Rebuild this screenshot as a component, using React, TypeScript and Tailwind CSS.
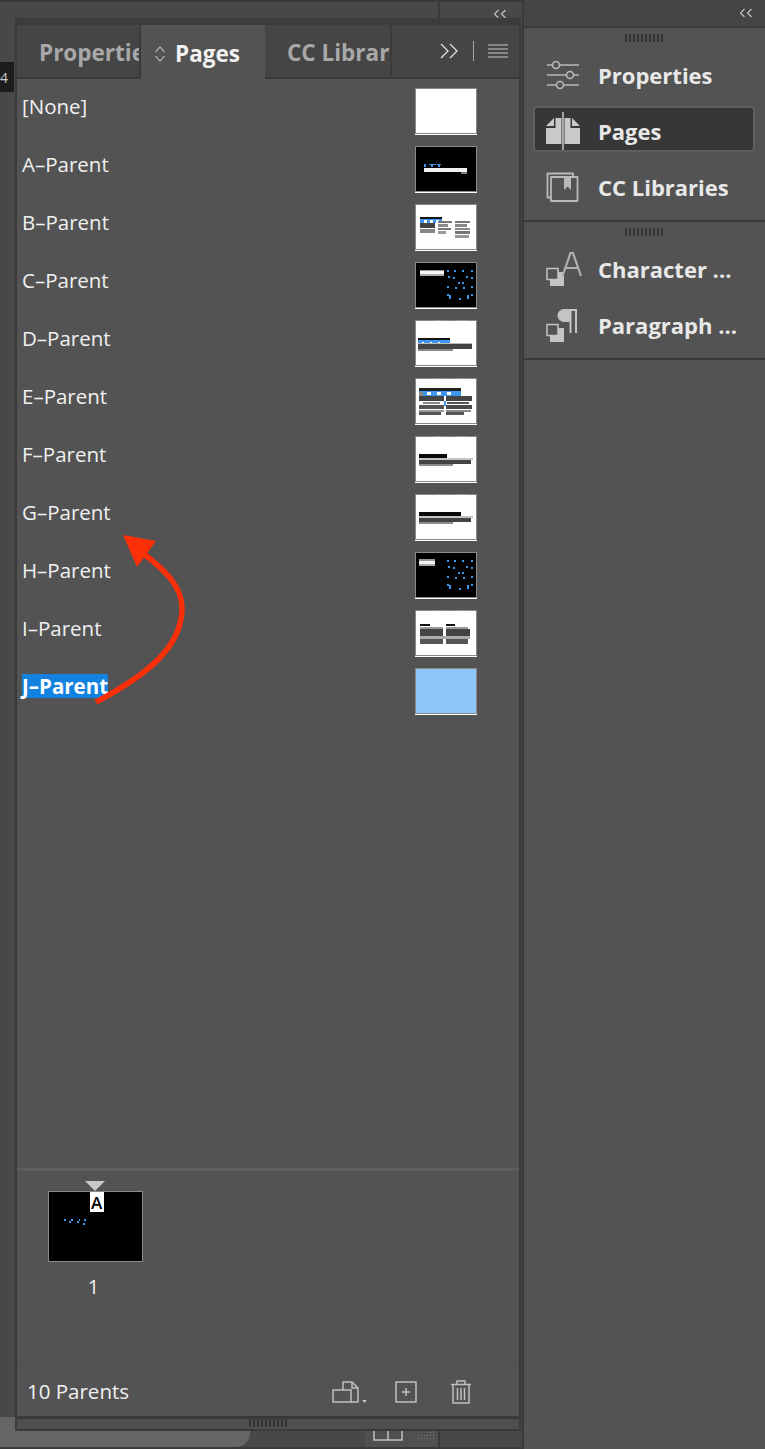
import { ReactNode } from "react";

const FONT = "font-['Open_Sans','Noto_Sans',sans-serif]";

type Bar = [number, number, number, number, string];

const BLUE = "#3d96ee";

// thumbnails are tiny page previews, drawn on a 62x46 grid
const dots = (): Bar[] => {
  const pts = [
    [32, 8], [39, 8], [47, 8], [56, 8], [33, 14], [38, 15], [51, 14], [56, 15],
    [43, 20], [47, 20], [32, 24], [40, 25], [48, 25], [56, 24], [32, 32], [56, 32],
  ];
  const bottom: Bar[] = [[34, 33, 2, 4, BLUE], [44, 36, 2, 2, BLUE], [52, 33, 2, 4, BLUE]];
  return [...pts.map(([x, y]) => [x, y, 2, 2, BLUE] as Bar), ...bottom];
};

const marks: Bar[] = [[20, 0, 6, 1, "#999999"], [43, 0, 9, 1, "#999999"]];

const textBars = (w: number, head: number): Bar[] => [
  ...marks,
  [4, 18, head, 4, "#0a0a0a"],
  [4, 22, w, 2, "#c4c4c4"],
  [4, 24, w - 2, 4, "#444444"],
  [4, 28, w - 20, 2, "#8c8c8c"],
];

const thumbs: { bg: string; bars: Bar[] }[] = [
  { bg: "#ffffff", bars: [] },
  {
    bg: "#000000",
    bars: [
      [9, 22, 43, 4, "#f0f0f0"],
      [46, 26, 6, 2, "#777777"],
      [9, 18, 2, 3, BLUE],
      [14, 18, 7, 1, BLUE],
      [16, 19, 2, 2, BLUE],
      [22, 18, 4, 1, BLUE],
      [23, 19, 2, 2, BLUE],
    ],
  },
  {
    bg: "#ffffff",
    bars: [
      [5, 13, 22, 2, "#111111"],
      [5, 15, 22, 4, BLUE],
      [9, 16, 3, 3, "#ffffff"],
      [15, 16, 3, 3, "#ffffff"],
      [21, 16, 3, 3, "#ffffff"],
      [5, 19, 15, 5, "#444444"],
      [5, 25, 15, 4, "#888888"],
      [23, 17, 14, 2, "#777777"],
      [23, 20, 10, 3, "#8a8a8a"],
      [23, 24, 13, 2, "#777777"],
      [23, 27, 8, 3, "#9a9a9a"],
      [40, 17, 15, 2, "#777777"],
      [40, 20, 12, 3, "#8a8a8a"],
      [40, 24, 15, 2, "#888888"],
      [40, 27, 15, 3, "#777777"],
      [40, 31, 14, 3, "#999999"],
    ],
  },
  { bg: "#000000", bars: [[5, 8, 24, 1, "#999999"], [5, 9, 24, 3, "#f4f4f4"], [5, 12, 24, 2, "#aaaaaa"], ...dots()] },
  {
    bg: "#ffffff",
    bars: [
      ...marks,
      [3, 18, 32, 2, "#111111"],
      [3, 20, 32, 4, BLUE],
      [7, 22, 2, 2, "#ffffff"],
      [15, 22, 2, 2, "#ffffff"],
      [23, 22, 2, 2, "#ffffff"],
      [3, 23, 54, 1, "#bbbbbb"],
      [3, 24, 54, 5, "#444444"],
      [3, 29, 35, 2, "#8a8a8a"],
    ],
  },
  {
    bg: "#ffffff",
    bars: [
      ...marks,
      [4, 10, 42, 3, "#222222"],
      [4, 13, 42, 5, BLUE],
      [4, 14, 4, 4, "#888888"],
      [12, 14, 4, 3, "#ffffff"],
      [22, 14, 4, 3, "#ffffff"],
      [32, 14, 4, 3, "#ffffff"],
      [4, 18, 25, 5, "#444444"],
      [31, 18, 26, 5, "#444444"],
      [8, 24, 17, 2, "#888888"],
      [29, 23, 2, 5, BLUE],
      [32, 24, 22, 2, "#555555"],
      [4, 27, 25, 4, "#555555"],
      [31, 27, 26, 4, "#4a4a4a"],
      [4, 32, 25, 2, "#999999"],
      [31, 32, 25, 2, "#888888"],
      [4, 34, 22, 3, "#555555"],
      [31, 34, 18, 3, "#555555"],
    ],
  },
  { bg: "#ffffff", bars: textBars(54, 28) },
  { bg: "#ffffff", bars: textBars(54, 42) },
  { bg: "#000000", bars: [[4, 7, 16, 2, "#999999"], [4, 9, 16, 3, "#f4f4f4"], [4, 12, 16, 2, "#aaaaaa"], ...dots()] },
  {
    bg: "#ffffff",
    bars: [
      ...marks,
      [5, 14, 10, 2, "#111111"],
      [31, 14, 9, 2, "#111111"],
      [5, 17, 23, 2, "#999999"],
      [31, 17, 22, 2, "#999999"],
      [5, 19, 23, 7, "#444444"],
      [31, 19, 24, 7, "#444444"],
      [5, 26, 50, 3, "#aaaaaa"],
      [5, 29, 23, 5, "#555555"],
      [31, 29, 22, 5, "#555555"],
    ],
  },
  { bg: "#8ec5fb", bars: [] },
];

const parents = ["[None]", "A\u2013Parent", "B\u2013Parent", "C\u2013Parent", "D\u2013Parent", "E\u2013Parent", "F\u2013Parent", "G\u2013Parent", "H\u2013Parent", "I\u2013Parent", "J\u2013Parent"];

function Thumb({ index }: { index: number }) {
  const t = thumbs[index];
  return (
    <svg width="62" height="48" viewBox="0 0 62 48" className="block shrink-0">
      <rect x="0.5" y="0.5" width="61" height="45" fill={t.bg} stroke="#8a8a8a" />
      <g className="blur-[0.4px]">
        {t.bars.map((b, i) => (
          <rect key={i} x={b[0]} y={b[1]} width={b[2]} height={b[3]} fill={b[4]} />
        ))}
      </g>
      <rect x="0" y="46" width="62" height="1" fill="#ffffff" />
    </svg>
  );
}

function Grip({ className = "" }: { className?: string }) {
  return (
    <div className={`flex h-2 gap-[2px] ${className}`}>
      {Array.from({ length: 10 }).map((_, i) => (
        <span key={i} className="h-full w-[2px] bg-[#333333]" />
      ))}
    </div>
  );
}

function Chevrons() {
  return (
    <svg width="14" height="10" viewBox="0 0 14 10" fill="none" stroke="#c4c4c4" strokeWidth="1.1">
      <path d="M5.500 1 1.500 5l4 4M12.500 1l-4 4 4 4" />
    </svg>
  );
}

function Tab({ label, active, width }: { label: string; active?: boolean; width: string }) {
  return (
    <div
      className={`${width} flex h-full shrink-0 items-center overflow-hidden pt-[3px] text-[22.5px] font-bold whitespace-nowrap ${
        active ? "bg-[#535353] text-[#f2f2f2]" : "border-r-2 border-b-2 border-[#3a3a3a] bg-[#454545] pl-[22px] text-[#a8a8a8]"
      }`}
    >
      {active && (
        <svg width="14" height="18" viewBox="0 0 14 18" fill="none" stroke="#c8c8c8" strokeWidth="1.1" className="mr-[8px] ml-3">
          <path d="M2.500 7 7 2l4.500 5M2.500 11 7 16l4.500-5" />
        </svg>
      )}
      {label}
    </div>
  );
}

function ParentRow({ name, index }: { name: string; index: number }) {
  const selected = index === 10;
  return (
    <div className="flex h-[58px] items-start justify-between pr-[42px] pl-[5px]">
      <span
        className={`mt-[6px] text-[20.5px] leading-[24px] whitespace-nowrap ${
          selected ? "bg-[#1281e0] font-bold text-white" : "font-medium text-[#f0f0f0]"
        }`}
      >
        {name}
      </span>
      <Thumb index={index} />
    </div>
  );
}

function DockItem({ icon, label, selected }: { icon: ReactNode; label: string; selected?: boolean }) {
  return (
    <div
      className={`mb-[10px] flex h-[46px] items-center rounded-[4px] pt-[4px] text-[22px] font-bold whitespace-nowrap text-[#e8e8e8] ${
        selected ? "border-2 border-[#5f5f5f] bg-[#373737] pl-[11px]" : "pl-[13px]"
      }`}
    >
      <span className="flex w-[52px] shrink-0 items-center">{icon}</span>
      {label}
    </div>
  );
}

const iconStroke = { fill: "none", stroke: "#b9b9b9", strokeWidth: 1.6 };

const PropertiesIcon = () => (
  <svg width="34" height="30" viewBox="0 0 34 30" {...iconStroke}>
    <path d="M1 5h5.500M13.500 5H33M1 15h19.500M27.500 15H33M1 25h9.500M17.500 25H33" />
    <circle cx="10" cy="5" r="3.500" />
    <circle cx="24" cy="15" r="3.500" />
    <circle cx="14" cy="25" r="3.500" />
  </svg>
);

const PagesIcon = () => (
  <svg width="34" height="38" viewBox="0 0 34 38" fill="#c9c9c9">
    <path d="M0 14 8 6v8zM0 16h9.500V6h6v26H0zM26 6l8 8h-8zM18.500 6h6v10H34v16H18.500z" />
    <path d="M17 0v38" stroke="#c9c9c9" strokeWidth="1.500" />
  </svg>
);

const LibrariesIcon = () => (
  <svg width="33" height="30" viewBox="0 0 33 30" fill="none" stroke="#b9b9b9" strokeWidth="1.800" strokeLinejoin="round">
    <path d="M5 25.500H1.500V1.500H27V5" />
    <path d="M5 5h26.500v24H5z" />
    <path d="M18 5v13l3.500-3.500L25 18V5z" fill="#b9b9b9" stroke="none" />
  </svg>
);

const Squares = ({ y }: { y: number }) => (
  <g transform={`translate(0 ${y})`}>
    <rect x="4" y="4" width="14" height="14" fill="#c4c4c4" />
    <rect x="1" y="0.500" width="11" height="11" fill="#535353" stroke="#c4c4c4" strokeWidth="1.500" />
  </g>
);

const CharacterIcon = () => (
  <svg width="38" height="38" viewBox="0 0 38 38">
    <Squares y={18} />
    <path d="m16.500 26 8-23h2.500l8 23M19.500 18h13" fill="none" stroke="#b0b0b0" strokeWidth="2.200" />
  </svg>
);

const ParagraphIcon = () => (
  <svg width="38" height="38" viewBox="0 0 38 38">
    <Squares y={18} />
    <path d="M24 3h-6a6.500 6.500 0 0 0 0 13h6z" fill="#c4c4c4" />
    <path d="M24.500 3v24M30 3v24M24 4h6" stroke="#c4c4c4" strokeWidth="2" fill="none" />
  </svg>
);

function ParentsPanel() {
  return (
    <div className="flex h-[1413px] w-[506px] flex-col border-x-2 border-[#3a3a3a] bg-[#535353]">
      <div className="h-[7px] shrink-0 bg-[#3c3c3c]" />
      <div className="flex h-[54px] shrink-0 bg-[#454545]">
        <Tab label="Properties" width="w-[124px]" />
        <Tab label="Pages" active width="w-[124px]" />
        <Tab label="CC Libraries" width="w-[127px]" />
        <div className="flex flex-1 items-center justify-end border-b-2 border-[#3a3a3a] pr-[11px]">
          <svg width="19" height="16" viewBox="0 0 19 16" fill="none" stroke="#e0e0e0" strokeWidth="1.300">
            <path d="m1 1 7 7-7 7M10 1l7 7-7 7" />
          </svg>
          <span className="mx-[14px] h-[20px] w-px bg-[#a8a8a8]" />
          <svg width="20" height="14" viewBox="0 0 20 14" stroke="#c8c8c8" strokeWidth="1.200">
            <path d="M0 1h20M0 5h20M0 9h20M0 13h20" />
          </svg>
        </div>
      </div>
      <div className="flex-1 pt-[9px]">
        {parents.map((name, i) => (
          <ParentRow key={name} name={name} index={i} />
        ))}
      </div>
      <div className="h-[3px] shrink-0 bg-[#5e5e5e]" />
      <div className="flex h-[196px] shrink-0 flex-col items-start border-b border-[#4e4e4e] pt-[10px] pl-[30px]">
        <div className="flex w-[96px] flex-col items-center">
          <span className="h-0 w-0 border-x-[10px] border-t-[10px] border-x-transparent border-t-[#c8c8c8]" />
          <div className="relative h-[71px] w-[95px] border border-[#8a8a8a] bg-black">
            <span className="absolute top-0 left-[41px] flex h-[20px] w-[14px] items-center justify-center bg-white text-[17px] leading-none font-semibold text-black">
              A
            </span>
            <svg width="26" height="8" viewBox="0 0 26 8" className="absolute top-[26px] left-[15px]" fill={BLUE} shapeRendering="crispEdges">
              <path d="M0 1h2v2H0zM5 3h2v2H5zM7 1h2v2H7zM13 3h2v2h-2zM15 1h1v2h-1zM20 1h2v2h-2zM19 5h2v2h-2z" />
            </svg>
          </div>
          <span className="mt-[12px] mr-[3px] text-[20px] leading-[26px] font-medium text-[#f0f0f0]">1</span>
        </div>
      </div>
      <div className="flex h-[49px] shrink-0 items-center pr-[47px] pl-[10px]">
        <span className="text-[20.5px] font-medium text-[#f0f0f0]">10 Parents</span>
        <div className="ml-auto flex items-center">
          <svg width="36" height="24" viewBox="0 0 36 24" fill="none" stroke="#c0c0c0" strokeWidth="1.500">
            <path d="M11 10V2h9l6 6v14h-7" />
            <path d="M20 2v6h6M1 10h18v12H1z" />
            <path d="m30 20 5 0-2.500 3z" fill="#c0c0c0" stroke="none" />
          </svg>
          <svg width="22" height="22" viewBox="0 0 22 22" fill="none" stroke="#c0c0c0" strokeWidth="1.500" className="ml-[27px]">
            <path d="M1 1h20v20H1zM11 7v8M7 11h8" />
          </svg>
          <svg width="22" height="24" viewBox="0 0 22 24" fill="none" stroke="#c0c0c0" strokeWidth="1.500" className="ml-[33px]">
            <path d="M1 4.500h20M7 4V1h8v3M3 5v18h16V5M7.500 8v12M11 8v12M14.500 8v12" />
          </svg>
        </div>
      </div>
      <div className="h-[3px] shrink-0 bg-[#3a3a3a]" />
      <div className="flex h-[12px] shrink-0 justify-center border-b-2 border-[#3a3a3a] bg-[#4f4f4f]">
        <Grip />
      </div>
    </div>
  );
}

function Dock() {
  return (
    <div className="z-10 flex h-full w-[243px] shrink-0 flex-col border-l-2 border-[#3a3a3a] bg-[#535353]">
      <div className="flex h-[28px] shrink-0 items-center justify-end border-b-2 border-[#3a3a3a] bg-[#454545] pr-[12px]">
        <Chevrons />
      </div>
      <div className="h-[194px] shrink-0 border-b-2 border-[#3a3a3a] pt-[6px] pr-[10px] pl-[9px]">
        <Grip className="mx-auto mb-[8px] w-fit" />
        <DockItem icon={<PropertiesIcon />} label="Properties" />
        <DockItem icon={<PagesIcon />} label="Pages" selected />
        <DockItem icon={<LibrariesIcon />} label="CC Libraries" />
      </div>
      <div className="h-[138px] shrink-0 border-b-2 border-[#3a3a3a] pt-[6px] pr-[10px] pl-[9px]">
        <Grip className="mx-auto mb-[8px] w-fit" />
        <DockItem icon={<CharacterIcon />} label="Character ..." />
        <DockItem icon={<ParagraphIcon />} label="Paragraph ..." />
      </div>
    </div>
  );
}

export default function App() {
  return (
    <div className={`relative flex h-[1449px] w-[765px] overflow-hidden bg-[#484848] ${FONT}`}>
      {/* document window peeking out behind the floating panel */}
      <div className="absolute top-0 right-0 left-0 h-[2px] bg-[#3a3a3a]" />
      <div className="absolute top-0 left-[438px] h-[18px] w-[2px] bg-[#3a3a3a]" />
      <div className="absolute top-[9px] left-[493px]">
        <Chevrons />
      </div>
      <div className="absolute top-[62px] left-0 flex h-[30px] w-[14px] items-center bg-[#1c1c1c] text-[14px] text-[#cccccc]">4</div>
      <div className="absolute top-[1417px] left-0 h-[30px] w-[250px] rounded-br-[14px] bg-[#666666]" />
      <div className="absolute top-[1431px] left-[365px] h-[16px] w-[73px] bg-[#505050]" />
      <div className="absolute top-[1431px] left-[438px] h-[16px] w-[2px] bg-[#3a3a3a]" />
      <svg width="30" height="12" viewBox="0 0 30 12" className="absolute top-[1431px] left-[373px]" fill="none" stroke="#c0c0c0" strokeWidth="1.500">
        <path d="M1 0v9h28V0M15 0v9" />
      </svg>
      <svg width="20" height="10" viewBox="0 0 20 10" className="absolute top-[1432px] left-[415px]" fill="#7a7a7a">
        <path d="M12 0h1v1h-1zM15 0h1v1h-1zM18 0h1v1h-1zM6 3h1v1H6zM9 3h1v1H9zM12 3h1v1h-1zM15 3h1v1h-1zM18 3h1v1h-1zM3 6h1v1H3zM6 6h1v1H6zM9 6h1v1H9zM12 6h1v1h-1zM15 6h1v1h-1zM18 6h1v1h-1z" />
      </svg>
      <div className="absolute right-0 bottom-0 left-0 h-[2px] bg-[#3a3a3a]" />

      <div className="relative w-[522px] shrink-0 pt-[18px] pl-[15px]">
        <ParentsPanel />
      </div>
      <Dock />

      {/* red annotation arrow */}
      <svg width="110" height="190" viewBox="0 0 110 190" className="absolute top-[530px] left-[90px] z-20" fill="none">
        <path d="M6 172C55 146 92 118 92 78 92 55 72 38 54 24" stroke="#fb2f08" strokeWidth="5.500" />
        <path d="m33 5 33 6-19 26z" fill="#fb2f08" />
      </svg>
    </div>
  );
}
